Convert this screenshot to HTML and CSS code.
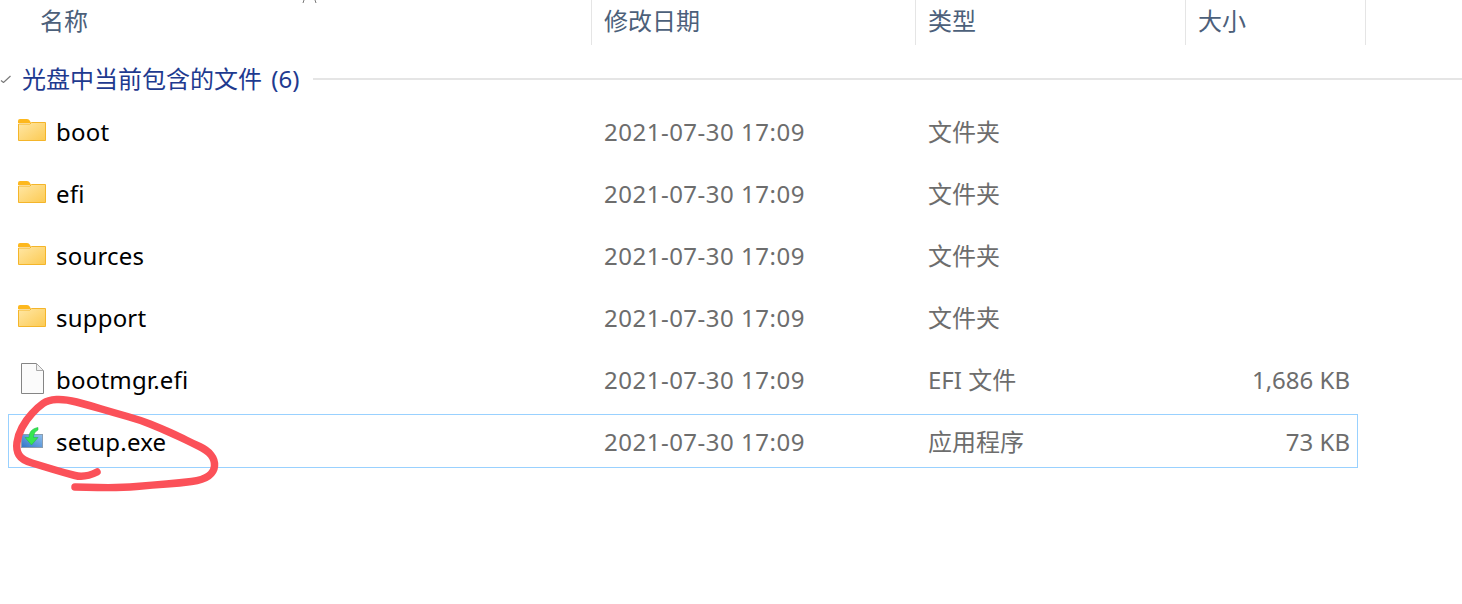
FILE: index.html
```html
<!DOCTYPE html>
<html lang="zh-CN">
<head>
    <meta charset="UTF-8">
    <title>光盘中当前包含的文件</title>
    <link rel="stylesheet" href="styles.css">
</head>
<body>
    <div class="explorer">
        <div class="columns">
            <div class="col col-name">名称</div>
            <div class="col col-date">修改日期</div>
            <div class="col col-type">类型</div>
            <div class="col col-size">大小</div>
        </div>

        <div class="group">
            <svg class="chevron" width="12" height="8" viewBox="0 0 12 8"><path d="M1 5.500 L3.500 7.500 L10.500 1" fill="none" stroke="#7a7a7a" stroke-width="1.200"/></svg>
            <span class="group-title">光盘中当前包含的文件 (6)</span>
            <span class="group-line"></span>
        </div>

        <div class="rows">
            <div class="row">
                <div class="name">
                    <svg class="icon" width="30" height="24" viewBox="0 0 30 24"><use href="#folder"/></svg>
                    boot
                </div>
                <div class="meta date">2021-07-30 17:09</div>
                <div class="meta type">文件夹</div>
                <div class="meta size"></div>
            </div>
            <div class="row">
                <div class="name">
                    <svg class="icon" width="30" height="24" viewBox="0 0 30 24"><use href="#folder"/></svg>
                    efi
                </div>
                <div class="meta date">2021-07-30 17:09</div>
                <div class="meta type">文件夹</div>
                <div class="meta size"></div>
            </div>
            <div class="row">
                <div class="name">
                    <svg class="icon" width="30" height="24" viewBox="0 0 30 24"><use href="#folder"/></svg>
                    sources
                </div>
                <div class="meta date">2021-07-30 17:09</div>
                <div class="meta type">文件夹</div>
                <div class="meta size"></div>
            </div>
            <div class="row">
                <div class="name">
                    <svg class="icon" width="30" height="24" viewBox="0 0 30 24"><use href="#folder"/></svg>
                    support
                </div>
                <div class="meta date">2021-07-30 17:09</div>
                <div class="meta type">文件夹</div>
                <div class="meta size"></div>
            </div>
            <div class="row">
                <div class="name">
                    <svg class="icon" width="30" height="32" viewBox="0 0 30 32">
                        <path d="M4.500 .5 H19.500 L26.500 7.500 V30.500 H4.500 Z" fill="#fbfbfb" stroke="#858585"/>
                        <path d="M19.500 .5 V7.500 H26.500 Z" fill="#f0f0f0" stroke="#a8a8a8"/>
                    </svg>
                    bootmgr.efi
                </div>
                <div class="meta date">2021-07-30 17:09</div>
                <div class="meta type">EFI 文件</div>
                <div class="meta size">1,686 KB</div>
            </div>
            <div class="row selected">
                <div class="name">
                    <svg class="icon" width="30" height="30" viewBox="0 0 30 30">
                        <defs>
                            <linearGradient id="tray" x1="1" y1="0" x2="0" y2="1">
                                <stop offset="0" stop-color="#8fc0ee"/>
                                <stop offset="1" stop-color="#2f74c8"/>
                            </linearGradient>
                        </defs>
                        <rect x="4.500" y="8.500" width="21" height="13" fill="url(#tray)" stroke="#8a9db0"/>
                        <path d="M21 1.500 C15 2.500 12 6 12 11.500 H8 L14.500 19 L21 11.500 H16.500 C16.500 8 18 5.500 21 4 Z" fill="#35e650" stroke="#1fb53e" stroke-width=".5"/>
                    </svg>
                    setup.exe
                </div>
                <div class="meta date">2021-07-30 17:09</div>
                <div class="meta type">应用程序</div>
                <div class="meta size">73 KB</div>
            </div>
        </div>
    </div>

    <!-- hand drawn circle around setup.exe -->
    <svg class="scribble" width="240" height="110" viewBox="0 0 240 110">
        <path d="M97,82 Q85,88 75,85.500 Q65,83 53.500,79.500 Q42,76 32,73 Q22,70 19,65 Q16,60 17,52.500 Q18,45 22,37.500 Q26,30 32,23.500 Q38,17 43,13.500 Q48,10 56.500,9.500 Q65,9 76.500,12 Q88,15 101.500,19 Q115,23 127.500,26.500 Q140,30 150,34 Q160,38 170,42.500 Q180,47 186,50 Q192,53 199.500,56.500 Q207,60 211,65 Q215,70 214.500,76 Q214,82 208.500,86 Q203,90 191.500,91.500 Q180,93 166.500,94 Q153,95 136.500,96.500 Q120,98 97.500,97.500 L75,97" fill="none" stroke="#fb5159" stroke-width="7.500" stroke-linecap="round" stroke-linejoin="round"/>
    </svg>

    <!-- bit of cut off text at the top edge -->
    <svg class="top-marks" width="16" height="3" viewBox="0 0 16 3"><path d="M1 3 L2 0 M13 0 L14 3" stroke="#777777"/></svg>

    <svg class="icon-defs" width="0" height="0">
        <defs>
            <linearGradient id="folderFill" x1="0" y1="0" x2="1" y2="1">
                <stop offset="0" stop-color="#ffe7a6"/>
                <stop offset="1" stop-color="#fcca52"/>
            </linearGradient>
            <symbol id="folder" viewBox="0 0 30 24">
                <path d="M1 2 Q1 0 3 0 H10 Q12 0 13 2 L14 4 H1 Z" fill="#fdb81e"/>
                <path d="M1.500 5 H13 L14.500 3.500 H28.500 V21.500 H1.500 Z" fill="url(#folderFill)" stroke="#f4b52a"/>
            </symbol>
        </defs>
    </svg>
</body>
</html>
```

FILE: styles.css
```css
body {
    margin: 0;
    height: 604px;
    overflow: hidden;
    position: relative;
    background-color: #ffffff;
    font-family: "Noto Sans", "Noto Sans CJK SC", sans-serif;
    font-size: 24px;
}

.columns {
    display: grid;
    grid-template-columns: 592px 324px 270px 180px;
    height: 45px;
}

.col {
    padding-left: 12px;
    border-right: 1px solid #e5e5e5;
    color: #4c607a;
    line-height: 42px;
}

.col-name {
    padding-left: 40px;
}

.group {
    display: flex;
    align-items: center;
    height: 34px;
    margin-top: 17px;
}

.chevron {
    margin-right: 10px;
}

.group-title {
    padding-bottom: 4px;
    color: #1e3a8f;
    white-space: nowrap;
    word-spacing: 3px;
}

.group-line {
    flex: 1;
    height: 2px;
    margin-left: 14px;
    background-color: #e5e5e5;
}

.rows {
    display: flex;
    flex-direction: column;
    gap: 8px;
    width: 1350px;
    margin-top: 8px;
    margin-left: 8px;
}

.row {
    display: grid;
    grid-template-columns: 595px 324px 270px 1fr;
    align-items: center;
    height: 54px;
    box-sizing: border-box;
    border: 1px solid transparent;
}

.row.selected {
    border-color: #99d1ff;
}

.name {
    display: flex;
    align-items: center;
    gap: 9px;
    padding-left: 8px;
    color: #000000;
    letter-spacing: 0.2px;
}

.meta {
    color: #6d6d6d;
}

.date {
    letter-spacing: 0.5px;
}

.type {
    padding-bottom: 2px;
}

.size {
    text-align: right;
    padding-right: 7px;
}

.scribble {
    position: absolute;
    left: 0;
    top: 390px;
}

.top-marks {
    position: absolute;
    left: 302px;
    top: 0;
}

.icon-defs {
    position: absolute;
}
```
